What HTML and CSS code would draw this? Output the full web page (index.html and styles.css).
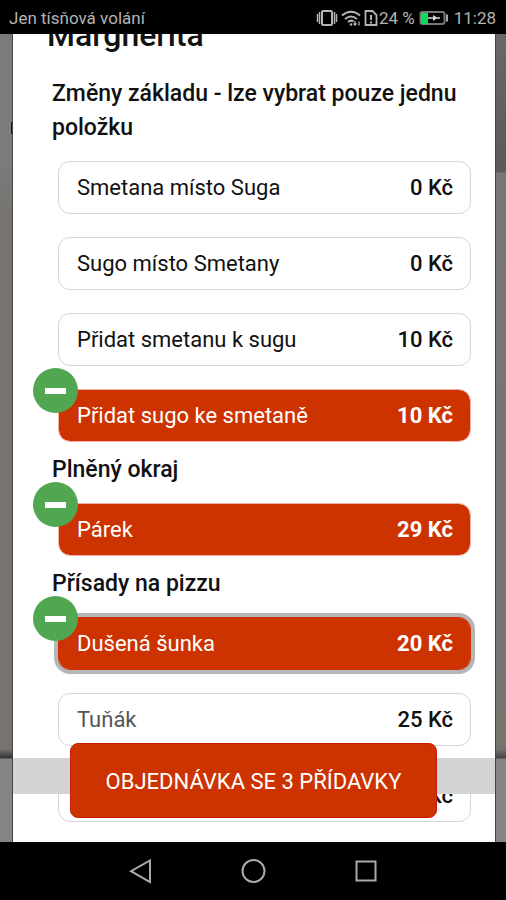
FILE: index.html
```html
<!DOCTYPE html>
<html lang="cs">
<head>
<meta charset="utf-8">
<meta name="viewport" content="width=device-width, initial-scale=1">
<title>Margherita</title>
<link rel="stylesheet" href="styles.css">
</head>
<body>
<div class="screen">
  <header class="status">
    <span class="carrier">Jen tísňová volání</span>
    <svg class="icon" width="22" height="18" viewBox="0 0 22 18" fill="none" stroke="currentColor" stroke-width="2"><rect x="6" y="2" width="10" height="14" rx="1"/><path d="M3.500 3v12M18.500 3v12" stroke-width="1.500"/><path d="M1.500 5v8M20.500 5v8" stroke-width="1.500"/></svg>
    <svg class="icon" width="20" height="18" viewBox="0 0 20 18" fill="none" stroke="currentColor" stroke-width="2"><path d="M1 6.500Q10 -1 19 6.500M4 10Q10 5 16 10M7 13Q10 10.500 12.500 12.500"/><circle cx="10" cy="15.500" r="1.300" fill="currentColor" stroke="none"/><path d="M14 12v4m-1.500-1.500 1.500 1.500 1.500-1.500M18 16.500v-4" stroke-width="1.300"/></svg>
    <svg class="icon sim" width="14" height="18" viewBox="0 0 14 18" fill="none" stroke="currentColor" stroke-width="1.800"><path d="M1.500 2h7l4 4v10h-11z"/><path d="M7 6v5M7 12.500v2" stroke-width="2"/></svg>
    <span class="percent">24 %</span>
    <svg class="icon" width="30" height="18" viewBox="0 0 30 18"><rect x="1.500" y="3" width="24" height="12" rx="2" fill="none" stroke="#777" stroke-width="2"/><path d="M2 4h7v11H2z" fill="#0bdc5b"/><path d="M28 5.500v7" stroke="#aaa" stroke-width="2"/><path d="M9 8.200h5V6l3.500 2.200H21v1.600h-3.500L14 12V9.800H9z" fill="#d8d8d8"/></svg>
    <span class="clock">11:28</span>
  </header>

  <main class="stage">
    <div class="backdrop backdrop-left"><i class="mark"></i></div>
    <section class="sheet" aria-labelledby="title">
      <h1 class="title" id="title">Margherita</h1>

      <h2 class="heading">Změny základu - lze vybrat pouze jednu položku</h2>
      <div class="group">
        <button class="option" type="button"><span>Smetana místo Suga</span><b>0 Kč</b></button>
        <button class="option" type="button"><span>Sugo místo Smetany</span><b>0 Kč</b></button>
        <button class="option" type="button"><span>Přidat smetanu k sugu</span><b>10 Kč</b></button>
        <button class="option selected" type="button"><span>Přidat sugo ke smetaně</span><b>10 Kč</b><i class="minus"></i></button>
      </div>

      <h2 class="heading">Plněný okraj</h2>
      <div class="group">
        <button class="option selected" type="button"><span>Párek</span><b>29 Kč</b><i class="minus"></i></button>
      </div>

      <h2 class="heading">Přísady na pizzu</h2>
      <div class="group">
        <button class="option selected focused" type="button"><span>Dušená šunka</span><b>20 Kč</b><i class="minus"></i></button>
        <button class="option" type="button"><span class="muted">Tuňák</span><b>25 Kč</b></button>
        <button class="option" type="button"><span></span><b>Kč</b></button>
      </div>

      <div class="order-bar">
        <button class="order" type="button">OBJEDNÁVKA SE 3 PŘÍDAVKY</button>
      </div>
    </section>
    <div class="backdrop backdrop-right"></div>
  </main>

  <nav class="system">
    <button type="button" aria-label="Zpět"><svg width="28" height="28" viewBox="0 0 28 28"><path d="M24 3.500v21.500L5 14.200z"/></svg></button>
    <button type="button" aria-label="Domů"><svg width="28" height="28" viewBox="0 0 28 28"><circle cx="14.500" cy="14" r="11"/></svg></button>
    <button type="button" aria-label="Přehled"><svg width="28" height="28" viewBox="0 0 28 28"><rect x="4.500" y="4.500" width="19" height="19"/></svg></button>
  </nav>
</div>
</body>
</html>
```
FILE: styles.css
```css
* {
  box-sizing: border-box;
}

body {
  margin: 0;
  background: #000;
  color: #111;
  font-family: Roboto, "Liberation Sans", sans-serif;
}

button {
  border: 0;
  font: inherit;
  color: inherit;
}

.screen {
  display: flex;
  flex-direction: column;
  height: 100vh;
}

.status {
  display: flex;
  align-items: center;
  height: 34px;
  padding: 2px 10px 0 9px;
  background: #000;
  color: #b4b4b4;
  font-size: 17px;
}

.carrier {
  flex: 1;
}

.icon {
  margin-right: 3px;
}

.sim {
  margin-right: 1px;
}

.percent {
  margin-right: 4px;
}

.clock {
  margin-left: 2px;
}

.stage {
  flex: 1;
  min-height: 0;
  display: grid;
  grid-template-columns: 13px 1fr 11px;
  overflow: hidden;
}

.backdrop-left {
  display: flex;
  justify-content: flex-end;
  border-right: 1px solid #444;
  background: linear-gradient(#7b7b7b 0, #7b7b7b 130px, #777470 180px, #777470 715px, #333 724px, #858585 725px);
}

.mark {
  width: 1px;
  height: 12px;
  margin-top: 88px;
  background: #102010;
}

.backdrop-right {
  border-left: 1px solid #444;
  background: linear-gradient(#686868 0, #5a5a5a 138px, #777 139px, #777470 715px, #444 724px, #858585 725px);
}

.sheet {
  position: relative;
  min-height: 0;
  padding: 0 24px 0 39px;
  background: #fff;
  overflow: hidden;
}

.title {
  margin: -16px -5px 25px;
  font-size: 32px;
  font-weight: 500;
  line-height: 34px;
}

.heading {
  margin: 0;
  font-size: 23px;
  font-weight: 500;
  line-height: 34px;
}

.group {
  display: grid;
  gap: 23px;
  padding: 16px 0 11px 6px;
}

.option {
  position: relative;
  display: flex;
  align-items: center;
  justify-content: space-between;
  height: 53px;
  padding: 0 17px 0 18px;
  border: 1px solid #d6d6d6;
  border-radius: 12px;
  background: #fff;
  font-size: 22px;
  text-align: left;
}

.option b {
  font-weight: 500;
}

.muted {
  color: #555;
}

.selected {
  border-color: #f0b0a8;
  background: #cc3300;
  background-clip: padding-box;
  color: #fff;
}

.selected b {
  font-weight: 700;
}

.focused {
  border-color: #cc3300;
  box-shadow: 0 0 0 4px #b4b6ba;
}

.minus {
  position: absolute;
  top: -22px;
  left: -26px;
  display: grid;
  place-items: center;
  width: 45px;
  height: 45px;
  border-radius: 50%;
  background: #50a651;
}

.minus::before {
  content: "";
  width: 21px;
  height: 6px;
  background: #fff;
}

.order-bar {
  position: absolute;
  right: 0;
  bottom: 48px;
  left: 0;
  display: flex;
  align-items: center;
  height: 36px;
  padding: 0 58px 0 57px;
  background: #d4d4d4;
}

.order {
  flex: 1;
  height: 75px;
  margin-top: 8px;
  padding: 2px 0 0;
  border: 1px solid #cc1a0a;
  border-radius: 8px;
  background: #cc3300;
  color: #fff;
  font-size: 22px;
  font-weight: 400;
}

.system {
  display: flex;
  align-items: center;
  justify-content: center;
  gap: 85px;
  height: 58px;
  background: #000;
}

.system button {
  display: flex;
  padding: 0;
  background: none;
}

.system svg {
  fill: none;
  stroke: #aaa;
  stroke-width: 2;
}
```
